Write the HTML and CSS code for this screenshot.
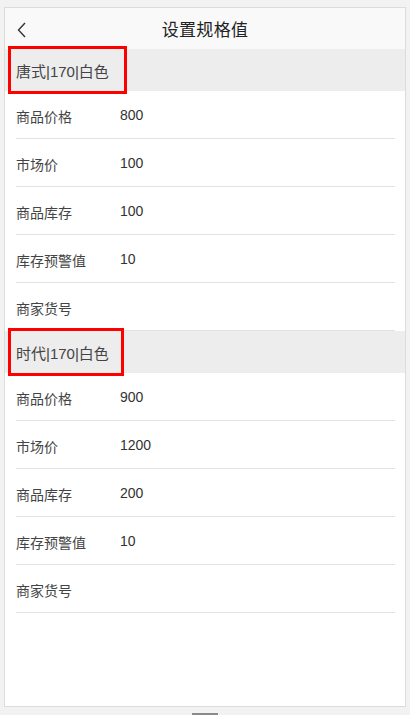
FILE: index.html
```html
<!DOCTYPE html>
<html lang="zh-CN">
  <head>
    <meta charset="UTF-8" />
    <meta name="viewport" content="width=device-width, initial-scale=1.0" />
    <title>设置规格值</title>
    <link rel="stylesheet" href="styles.css">
  </head>
  <body>
    <div class="card">
      <div class="header">
        <span class="back">
          <svg width="10" height="16" viewBox="0 0 10 16"><polyline points="8,1 1.5,8 8,15" fill="none" stroke="#333" stroke-width="1.4" /></svg>
        </span>
        <h3>设置规格值</h3>
      </div>

      <div class="spec-title"><span class="spec-name">唐式|170|白色</span></div>
      <div class="row"><span class="label">商品价格</span><span class="value">800</span></div>
      <div class="row"><span class="label">市场价</span><span class="value">100</span></div>
      <div class="row"><span class="label">商品库存</span><span class="value">100</span></div>
      <div class="row"><span class="label">库存预警值</span><span class="value">10</span></div>
      <div class="row"><span class="label">商家货号</span><span class="value"></span></div>

      <div class="spec-title"><span class="spec-name short">时代|170|白色</span></div>
      <div class="row"><span class="label">商品价格</span><span class="value">900</span></div>
      <div class="row"><span class="label">市场价</span><span class="value">1200</span></div>
      <div class="row"><span class="label">商品库存</span><span class="value">200</span></div>
      <div class="row"><span class="label">库存预警值</span><span class="value">10</span></div>
      <div class="row"><span class="label">商家货号</span><span class="value"></span></div>
    </div>
    <div class="handle"></div>
  </body>
</html>
```

FILE: styles.css
```css
body {
  margin: 0;
  background-color: #f2f2f2;
  font-family: "Liberation Sans", "Noto Sans CJK SC", sans-serif;
  color: #333;
  overflow: hidden;
}

.card {
  box-sizing: border-box;
  width: 402px;
  height: 700px;
  margin: 7px 0 0 4px;
  background-color: #fff;
  border: 1px solid #dcdcdc;
}

.header {
  position: relative;
  height: 41px;
  background-color: #f9f9f9;
  display: flex;
  align-items: center;
  justify-content: center;
}

.header h3 {
  margin: 0;
  font-size: 17px;
  font-weight: normal;
  color: #222;
  letter-spacing: 0.3px;
}

/* back arrow sits over the header bar */
.back {
  position: absolute;
  left: 12px;
  top: 14px;
  display: flex;
}

.spec-title {
  position: relative;
  z-index: 1;
  height: 42px;
  background-color: #ededed;
  padding-left: 6px;
  display: flex;
}

.spec-name {
  display: flex;
  align-items: center;
  padding: 0 15px 0 5px;
  font-size: 15px;
  color: #444;
  outline: 3px solid #f00; /* highlight box */
}

.spec-name.short {
  padding-right: 12px;
}

.row {
  height: 47px;
  margin: 0 10px 0 11px;
  border-bottom: 1px solid #e3e3e3;
  display: flex;
  align-items: center;
  font-size: 14px;
}

.label {
  width: 104px;
  padding-top: 2px;
  color: #444;
}

.value {
  color: #333;
}

.handle {
  width: 26px;
  height: 3px;
  margin: 6px auto 0;
  background-color: #8a8a8a;
}
```
